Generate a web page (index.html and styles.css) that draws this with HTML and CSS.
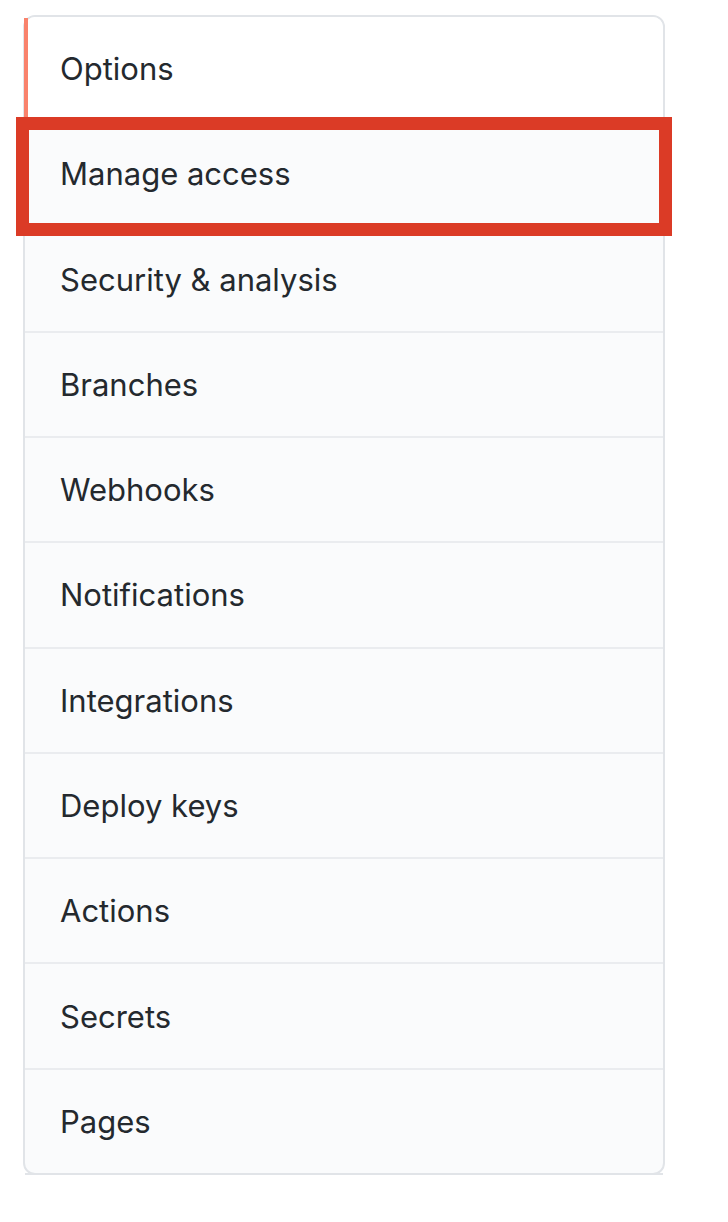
FILE: index.html
```html
<!DOCTYPE html>
<html lang="en">
<head>
<meta charset="utf-8">
<title>Settings menu</title>
<link rel="stylesheet" href="styles.css">
</head>
<body>
<div class="page">
  <nav class="menu">
    <a class="item selected">Options</a>
    <a class="item">Manage access</a>
    <a class="item">Security &amp; analysis</a>
    <a class="item">Branches</a>
    <a class="item">Webhooks</a>
    <a class="item">Notifications</a>
    <a class="item">Integrations</a>
    <a class="item">Deploy keys</a>
    <a class="item">Actions</a>
    <a class="item">Secrets</a>
    <a class="item">Pages</a>
    <div class="highlight"></div>
  </nav>
</div>
</body>
</html>
```

FILE: styles.css
```css
html, body {
  margin: 0;
  padding: 0;
  background: #ffffff;
}

.page {
  padding: 15px 0 0 23px;
}

.menu {
  position: relative;
  box-sizing: border-box;
  width: 642px;
  height: 1160px;
  display: flex;
  flex-direction: column;
  border: 2px solid #e1e4e8;
  border-radius: 12px;
  background: #fafbfc;
}

.menu::after {
  content: "";
  position: absolute;
  left: 0;
  right: 0;
  bottom: -2px;
  height: 2px;
  background: #e1e4e8;
}

.item {
  position: relative;
  flex: 1 1 0;
  display: flex;
  align-items: center;
  padding-left: 35px;
  border-top: 2px solid #eaecef;
  font-family: Inter, "Liberation Sans", sans-serif;
  font-size: 31px;
  color: #24292e;
  text-decoration: none;
}

.item:first-child {
  border-top: none;
}

.item.selected {
  background: #ffffff;
  border-radius: 10px 10px 0 0;
}

.item.selected::before {
  content: "";
  position: absolute;
  left: -1px;
  top: 1px;
  bottom: 0;
  width: 4px;
  background: #f9826c;
}

.highlight {
  position: absolute;
  left: -9px;
  top: 100px;
  width: 656px;
  height: 119px;
  box-sizing: border-box;
  border: 13px solid #db3b26;
}
```
